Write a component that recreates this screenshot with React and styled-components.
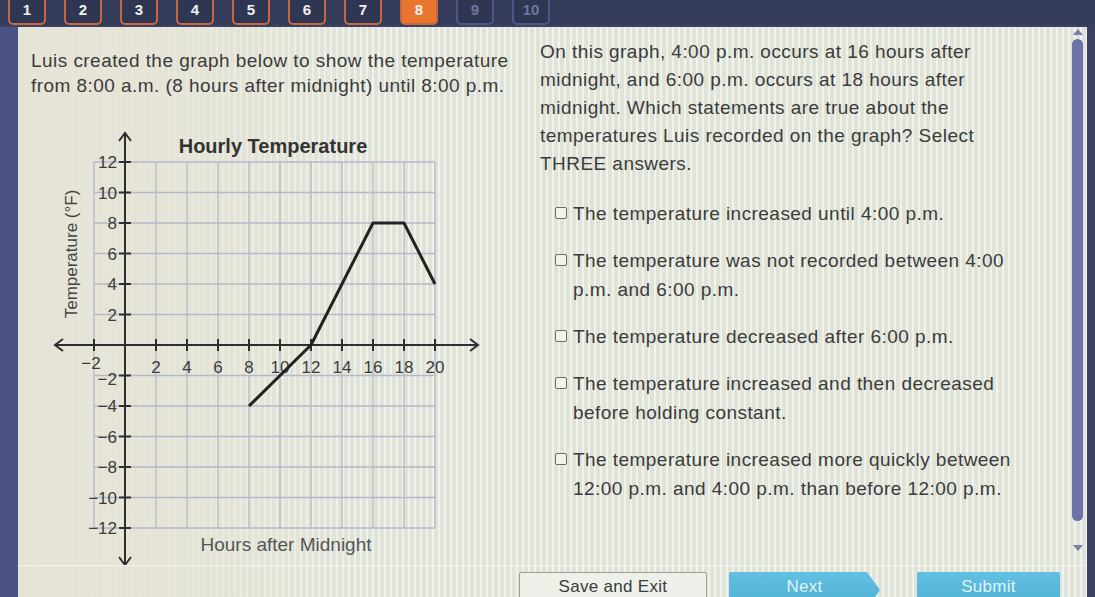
import styled, { createGlobalStyle } from "styled-components";

const GlobalStyle = createGlobalStyle`
  html, body {
    margin: 0;
    padding: 0;
    height: 100%;
    overflow: hidden;
    background: #3a4162;
  }
  body {
    font-family: "Liberation Sans", Arial, sans-serif;
  }
`;

// Styled Components
const Screen = styled.div`
  height: 597px;
  display: flex;
  flex-direction: column;
  overflow: hidden;
`;

const TabBar = styled.div`
  height: 25px;
  flex-shrink: 0;
  display: flex;
  align-items: flex-end;
  gap: 18px;
  padding-left: 8px;
  background: #353c59;
  overflow: hidden;
`;

const Tab = styled.div`
  width: 38px;
  height: 38px;
  flex-shrink: 0;
  box-sizing: border-box;
  border: 2px solid ${({ state }) => (state === "todo" ? "#4c5785" : "#c9683f")};
  border-radius: 5px;
  background: ${({ state }) => (state === "current" ? "#e8762f" : "#2f3652")};
  color: ${({ state }) => (state === "todo" ? "#6f78a0" : "#f1f1f1")};
  font-size: 15px;
  font-weight: bold;
  line-height: 15px;
  text-align: center;
  padding-top: 13px;
`;

const Body = styled.div`
  flex: 1;
  display: flex;
  margin-top: 2px;
  min-height: 0;
`;

const LeftEdge = styled.div`
  width: 18px;
  background: #4a5381;
`;

const RightEdge = styled.div`
  width: 8px;
  background: #3a4162;
`;

const Panel = styled.div`
  flex: 1;
  display: flex;
  flex-direction: column;
  background-color: #e0e4d8;
  background-image:
    linear-gradient(90deg, rgba(230, 228, 214, 1) 0, rgba(230, 228, 214, 0.85) 140px, rgba(230, 228, 214, 0) 340px),
    repeating-linear-gradient(90deg, rgba(255, 255, 255, 0.5) 0, rgba(255, 255, 255, 0.5) 2px, rgba(0, 0, 0, 0) 2px, rgba(0, 0, 0, 0) 6px);
  color: #3b3b3b;
`;

const Content = styled.div`
  height: 539px;
  display: flex;
`;

const LeftCol = styled.div`
  width: 522px;
  flex-shrink: 0;
  box-sizing: border-box;
  padding: 21px 0 0 13px;
`;

const Text = styled.p`
  margin: 0;
  font-size: 19px;
  letter-spacing: 0.45px;
  line-height: ${({ lh }) => lh || 25}px;
  white-space: nowrap;
`;

const Graph = styled.svg`
  display: block;
  margin: 22px 0 0 19px;
  font-family: "Liberation Sans", Arial, sans-serif;
`;

const RightCol = styled.div`
  flex: 1;
  padding-top: 11px;
`;

const Question = styled(Text)`
  margin-bottom: 21px;
`;

const Options = styled.div`
  display: flex;
  flex-direction: column;
  gap: 18px;
`;

const Option = styled.label`
  display: flex;
  gap: 6px;
  padding-left: 15px;
  font-size: 19px;
  letter-spacing: 0.45px;
  line-height: 29px;
  white-space: nowrap;
`;

const Box = styled.span`
  width: 12px;
  height: 12px;
  flex-shrink: 0;
  margin-top: 8px;
  box-sizing: border-box;
  border: 1.5px solid #6a6a6a;
  border-radius: 2px;
  background: #f3f3ee;
`;

const ScrollTrack = styled.div`
  width: 13px;
  margin-right: 3px;
  display: flex;
  flex-direction: column;
  align-items: center;
  padding: 2px 0 14px;
  box-sizing: border-box;
`;

const Arrow = styled.div`
  width: 0;
  height: 0;
  border-left: 5px solid transparent;
  border-right: 5px solid transparent;
  ${({ up }) =>
    up ? "border-bottom: 6px solid #7a80a8;" : "border-top: 6px solid #7a80a8;"}
`;

const Thumb = styled.div`
  flex: 1;
  width: 11px;
  margin: 4px 0 24px;
  border-radius: 6px;
  background: #6a72a6;
`;

const Footer = styled.div`
  flex: 1;
  display: flex;
  align-items: flex-start;
  padding: 6px 0 0 501px;
  border-top: 1px solid rgba(255, 255, 255, 0.55);
`;

const Button = styled.button`
  height: 36px;
  flex-shrink: 0;
  width: ${({ w }) => w}px;
  margin-right: ${({ gap }) => gap || 0}px;
  box-sizing: border-box;
  padding: 0 0 6px;
  font-family: "Liberation Sans", Arial, sans-serif;
  font-size: 17px;
  letter-spacing: 0.3px;
  border-radius: 2px;
  border: ${({ primary }) => (primary ? "none" : "1px solid #9b9e9a")};
  background: ${({ primary }) => (primary ? "linear-gradient(#62bfe0, #4eb0d5)" : "#eef0ea")};
  color: ${({ primary }) => (primary ? "#dff4fb" : "#3b3b3b")};
  clip-path: ${({ arrow }) =>
    arrow ? "polygon(0 0, calc(100% - 13px) 0, 100% 50%, calc(100% - 13px) 100%, 0 100%)" : "none"};
`;

const X = (u) => 75 + 15.5 * u;
const Y = (v) => 225 - 15.25 * v;

const xTicks = [-2, 2, 4, 6, 8, 10, 12, 14, 16, 18, 20];
const yTicks = [12, 10, 8, 6, 4, 2, -2, -4, -6, -8, -10, -12];
const data = [
  [8, -4],
  [12, 0],
  [16, 8],
  [18, 8],
  [20, 4],
];

const label = (n) => (n < 0 ? `\u2212${Math.abs(n)}` : `${n}`);

const TemperatureGraph = () => (
  <Graph width="440" height="445" viewBox="0 0 440 445">
    {xTicks.map((u) => (
      <line key={`gv${u}`} x1={X(u)} y1={Y(12)} x2={X(u)} y2={Y(-12)} stroke="#b4b8c8" strokeWidth="1.3" />
    ))}
    {yTicks.map((v) => (
      <line key={`gh${v}`} x1={X(-2)} y1={Y(v)} x2={X(20)} y2={Y(v)} stroke="#b4b8c8" strokeWidth="1.3" />
    ))}

    <g stroke="#2e2e2e" strokeWidth="2" fill="none">
      <line x1="5" y1="225" x2="428" y2="225" />
      <path d="M13 219 L5 225 L13 231" />
      <path d="M420 219 L428 225 L420 231" />
      <line x1="75" y1="13" x2="75" y2="445" />
      <path d="M69 21 L75 13 L81 21" />
      <path d="M69 437 L75 445 L81 437" />
      {xTicks.map((u) => (
        <line key={`tx${u}`} x1={X(u)} y1="219" x2={X(u)} y2="231" />
      ))}
      {yTicks.map((v) => (
        <line key={`ty${v}`} x1="69" y1={Y(v)} x2="81" y2={Y(v)} />
      ))}
    </g>

    <g fill="#3c3c3c" fontSize="17">
      {xTicks.map((u) => (
        <text key={`lx${u}`} x={u === -2 ? X(u) - 3 : X(u)} y={u === -2 ? 249 : 253} textAnchor="middle">
          {label(u)}
        </text>
      ))}
      {yTicks.map((v) => (
        <text key={`ly${v}`} x="67" y={v === -2 ? Y(v) + 9 : Y(v) + 6} textAnchor="end">
          {label(v)}
        </text>
      ))}
    </g>

    <polyline
      points={data.map(([u, v]) => `${X(u)},${Y(v)}`).join(" ")}
      fill="none"
      stroke="#222"
      strokeWidth="3"
      strokeLinejoin="round"
    />

    <text x="223" y="33" textAnchor="middle" fontSize="20" fontWeight="bold" fill="#333">
      Hourly Temperature
    </text>
    <text x="27" y="134" textAnchor="middle" fontSize="17" fill="#444" transform="rotate(-90 27 134)">
      Temperature (°F)
    </text>
    <text x="236" y="431" textAnchor="middle" fontSize="19" fill="#555">
      Hours after Midnight
    </text>
  </Graph>
);

const options = [
  ["The temperature increased until 4:00 p.m."],
  ["The temperature was not recorded between 4:00", "p.m. and 6:00 p.m."],
  ["The temperature decreased after 6:00 p.m."],
  ["The temperature increased and then decreased", "before holding constant."],
  ["The temperature increased more quickly between", "12:00 p.m. and 4:00 p.m. than before 12:00 p.m."],
];

const tabs = [1, 2, 3, 4, 5, 6, 7, 8, 9, 10];

const App = () => {
  return (
    <Screen>
      <GlobalStyle />
      <TabBar>
        {tabs.map((n) => (
          <Tab key={n} state={n === 8 ? "current" : n > 8 ? "todo" : "done"}>
            {n}
          </Tab>
        ))}
      </TabBar>
      <Body>
        <LeftEdge />
        <Panel>
          <Content>
            <LeftCol>
              <Text>
                Luis created the graph below to show the temperature
                <br />
                from 8:00 a.m. (8 hours after midnight) until 8:00 p.m.
              </Text>
              <TemperatureGraph />
            </LeftCol>
            <RightCol>
              <Question lh={28}>
                On this graph, 4:00 p.m. occurs at 16 hours after
                <br />
                midnight, and 6:00 p.m. occurs at 18 hours after
                <br />
                midnight. Which statements are true about the
                <br />
                temperatures Luis recorded on the graph? Select
                <br />
                THREE answers.
              </Question>
              <Options>
                {options.map((lines, i) => (
                  <Option key={i}>
                    <Box />
                    <span>
                      {lines.map((l, j) => (
                        <span key={j}>
                          {j > 0 && <br />}
                          {l}
                        </span>
                      ))}
                    </span>
                  </Option>
                ))}
              </Options>
            </RightCol>
            <ScrollTrack>
              <Arrow up />
              <Thumb />
              <Arrow />
            </ScrollTrack>
          </Content>
          <Footer>
            <Button w={188} gap={22}>Save and Exit</Button>
            <Button w={151} gap={37} primary arrow>Next</Button>
            <Button w={143} primary>Submit</Button>
          </Footer>
        </Panel>
        <RightEdge />
      </Body>
    </Screen>
  );
};

export default App;
